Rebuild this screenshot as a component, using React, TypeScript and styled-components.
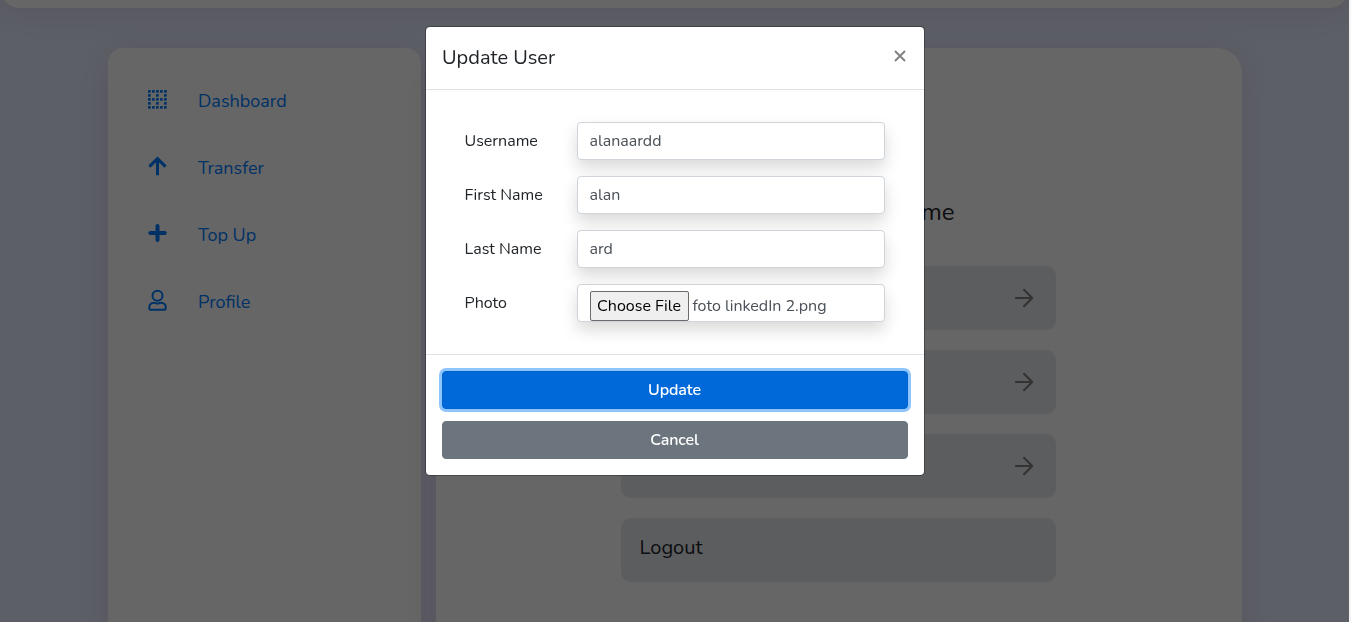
import React from "react";
import styled, { createGlobalStyle } from "styled-components";

const GlobalStyle = createGlobalStyle`
  *, *::before, *::after { box-sizing: border-box; }
  body {
    margin: 0;
    background: #f4f4f4;
    color: #212529;
    font-family: Nunito, Lato, "Liberation Sans", sans-serif;
    font-size: 16px;
    font-weight: 384;
    line-height: 1.5;
    overflow: hidden;
  }
`;

const Page = styled.div`
  display: flex;
  flex-direction: column;
  width: 1349px;
  height: 622px;
  overflow: hidden;
  background: #e6eefe;
`;

const cardShadow = "0 4px 30px rgba(200, 150, 190, 0.3)";

const Navbar = styled.header`
  flex: none;
  height: 100px;
  margin-top: -92px;
  border-radius: 20px;
  background: #fff;
  box-shadow: ${cardShadow};
`;

const Columns = styled.div`
  display: grid;
  flex: none;
  grid-template-columns: 313px 806px;
  column-gap: 15px;
  height: 700px;
  margin: 40px 0 0 108px;
`;

const Sidebar = styled.nav`
  padding: 35px 40px;
  border-radius: 15px;
  background: #fff;
  box-shadow: ${cardShadow};
`;

const NavItem = styled.a`
  display: flex;
  align-items: center;
  height: 36px;
  margin-bottom: 31px;
  color: #007bff;
  font-size: 18px;
  svg { width: 19px; height: 22px; margin: -2px 31px 0 0; overflow: visible; }
`;

const Content = styled.main`
  display: flex;
  flex-direction: column;
  align-items: center;
  padding: 146px 1px 0 0;
  border-radius: 25px;
  background: #fff;
  box-shadow: ${cardShadow};
`;

const ProfileName = styled.h1`
  width: 232px;
  margin: 0 0 36px;
  font-size: 24px;
  font-weight: inherit;
  line-height: 36px;
  text-align: right;
`;

const Option = styled.div`
  display: flex;
  justify-content: space-between;
  width: 435px;
  height: 64px;
  margin-bottom: 20px;
  padding: 15px 20px 0 18.5px;
  border-radius: 10px;
  background: #e5e8ed;
  font-size: 20px;
`;

const OptionArrow = styled.svg`
  width: 24px;
  height: 24px;
  margin: 5px 0 0 auto;
`;

const Backdrop = styled.div`
  position: fixed;
  inset: 0 auto 0 0;
  width: 1349px;
  background: rgba(0, 0, 0, 0.6);
`;

const Modal = styled.section`
  position: fixed;
  top: 26px;
  left: 425px;
  width: 500px;
  border: 1px solid rgba(0, 0, 0, 0.3);
  border-radius: 4.8px;
  background: #fff;
  background-clip: padding-box;
`;

const ModalHeader = styled.header`
  display: flex;
  justify-content: space-between;
  height: 63px;
  padding: 15px 16px;
  border-bottom: 1px solid #dee2e6;
`;

const ModalTitle = styled.h5`
  margin: 0;
  font-size: 20px;
  font-weight: inherit;
  line-height: 32px;
`;

const CloseButton = styled.button`
  display: flex;
  width: 16px;
  height: 28px;
  padding: 0;
  align-items: center;
  justify-content: center;
  border: 0;
  background: none;
`;

const Form = styled.form`
  display: grid;
  row-gap: 16px;
  padding: 32px 39px 32px 38.5px;
`;

const Field = styled.div`
  display: grid;
  grid-template-columns: 112px 308px;
  height: 38px;
  line-height: 38px;
`;

const control = `
  width: 308px;
  height: 38px;
  padding: 6px 12px;
  border: 1px solid #ced4da;
  border-radius: 4px;
  background: #fff;
  box-shadow: 0 8px 16px rgba(0, 0, 0, 0.15);
  color: #495057;
`;

const Input = styled.input`
  ${control}
  font: inherit;
  line-height: 24px;
  outline: 0;
`;

const FileInput = styled.div`
  ${control}
  display: flex;
  overflow: hidden;
  line-height: 30px;
`;

const FileButton = styled.button`
  flex: none;
  width: 99px;
  height: 30px;
  margin-right: 4px;
  padding: 0;
  border: 1px solid #6b6b6b;
  border-radius: 2px;
  background: #efefef;
  color: #000;
  font: inherit;
  line-height: 28px;
`;

const ModalFooter = styled.footer`
  display: grid;
  row-gap: 12px;
  padding: 16px;
  border-top: 1px solid #dee2e6;
`;

const Button = styled.button<{ $primary?: boolean }>`
  height: 38px;
  padding: 0 1px 1px 0;
  border: 1px solid ${(p) => (p.$primary ? "#0062cc" : "#6c757d")};
  border-radius: 4px;
  background: ${(p) => (p.$primary ? "#0069d9" : "#6c757d")};
  box-shadow: ${(p) => (p.$primary ? "0 0 0 3px #8fc5ff" : "none")};
  color: #fff;
  font: inherit;
  font-weight: 600;
  letter-spacing: -0.1px;
`;

const GridIcon = () => {
  const steps = [0, 1, 2, 3, 4];
  return (
    <svg viewBox="0 0 19 22" fill="currentColor">
      {steps.flatMap((r) =>
        steps
          .filter((c) => r % 2 === 0 || c % 2 === 0)
          .map((c) => <rect key={`${r}-${c}`} x={c * 4} y={1 + r * 4} width="2.7" height="2.7" rx="0.4" />)
      )}
    </svg>
  );
};

const UpIcon = () => (
  <svg viewBox="0 0 19 22" fill="none" stroke="currentColor" strokeWidth="3">
    <path d="M9.5 19.3V3.5M1.4 10.6 9.5 2.6l8.1 8" />
  </svg>
);

const PlusIcon = () => (
  <svg viewBox="0 0 19 22" fill="none" stroke="currentColor" strokeWidth="4" strokeLinecap="round">
    <path d="M9.5 3v14M2.3 10h14.4" />
  </svg>
);

const UserIcon = () => (
  <svg viewBox="0 0 19 22" fill="none" stroke="currentColor" strokeWidth="2">
    <circle cx="9.5" cy="5.7" r="5" />
    <path d="M5.9 12.7c1.6 0 1.8.8 3.6.8s2-.8 3.6-.8c2.8 0 4.6 2 4.6 4.6v1.1c0 .9-.5 1.3-1.3 1.3H2.6c-.8 0-1.3-.4-1.3-1.3v-1.1c0-2.6 1.8-4.6 4.6-4.6Z" />
  </svg>
);

const ArrowIcon = () => (
  <OptionArrow viewBox="0 0 24 24" fill="none" stroke="#808080" strokeWidth="2" strokeLinecap="round" strokeLinejoin="round">
    <path d="M3.8 12h16.5M12 3.7l8.3 8.3-8.3 8.3" />
  </OptionArrow>
);

const menu = [
  { label: "Dashboard", icon: <GridIcon /> },
  { label: "Transfer", icon: <UpIcon /> },
  { label: "Top Up", icon: <PlusIcon /> },
  { label: "Profile", icon: <UserIcon /> },
];

const fields = [
  { label: "Username", value: "alanaardd" },
  { label: "First Name", value: "alan" },
  { label: "Last Name", value: "ard" },
];

export default function App() {
  return (
    <>
      <GlobalStyle />
      <Page>
        <Navbar />
        <Columns>
          <Sidebar>
            {menu.map((item) => (
              <NavItem key={item.label}>
                {item.icon}
                <span>{item.label}</span>
              </NavItem>
            ))}
          </Sidebar>
          <Content>
            <ProfileName>me</ProfileName>
            <Option><ArrowIcon /></Option>
            <Option><ArrowIcon /></Option>
            <Option><ArrowIcon /></Option>
            <Option>Logout</Option>
          </Content>
        </Columns>
      </Page>
      <Backdrop />
      <Modal>
        <ModalHeader>
          <ModalTitle>Update User</ModalTitle>
          <CloseButton aria-label="Close">
            <svg width="12" height="12" viewBox="0 0 12 12" fill="none" stroke="#808080" strokeWidth="1.9">
              <path d="m1 1 10 10M11 1 1 11" />
            </svg>
          </CloseButton>
        </ModalHeader>
        <Form>
          {fields.map((f) => (
            <Field key={f.label}>
              <span>{f.label}</span>
              <Input defaultValue={f.value} />
            </Field>
          ))}
          <Field>
            <span>Photo</span>
            <FileInput>
              <FileButton type="button">Choose File</FileButton>
              <span>foto linkedIn 2.png</span>
            </FileInput>
          </Field>
        </Form>
        <ModalFooter>
          <Button $primary>Update</Button>
          <Button>Cancel</Button>
        </ModalFooter>
      </Modal>
    </>
  );
}
